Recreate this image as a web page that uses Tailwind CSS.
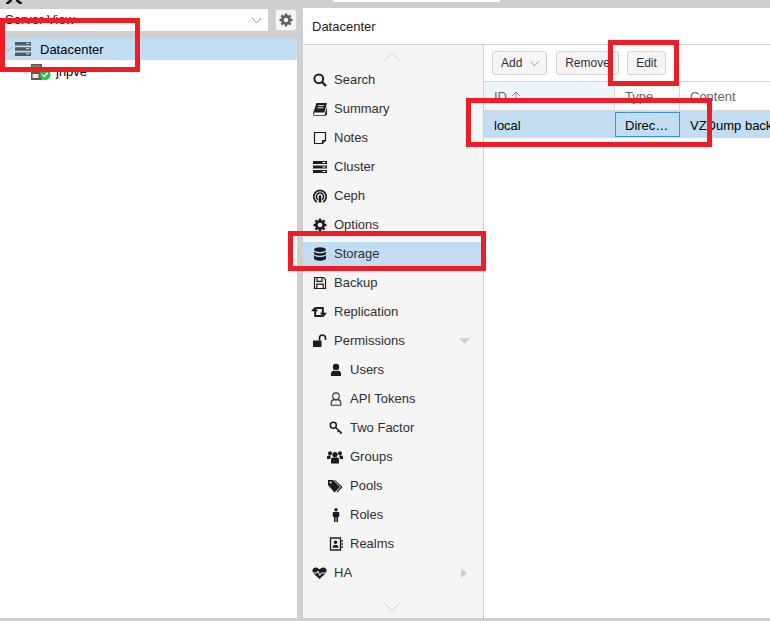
<!DOCTYPE html>
<html lang="en">
<head>
  <meta charset="UTF-8" />
  <meta name="viewport" content="width=device-width, initial-scale=1.0"/>
  <title>Datacenter - Storage</title>
  <script src="https://cdn.jsdelivr.net/npm/@tailwindcss/browser@4"></script>
</head>
<body class="bg-[#cfcfcf] font-['Liberation_Sans',Arial,sans-serif] text-[13px] text-[#303030]">
<div class="relative w-[770px] h-[621px] overflow-hidden flex flex-col">

  <!-- top strip, cut off by the crop -->
  <div class="h-[8px] shrink-0 flex items-start">
    <svg class="ml-[5px] w-[18px] h-[4px]" viewBox="0 0 18 4"><path d="M6.500 0 L1.500 4 M11.500 0 L16.500 4" stroke="#111" stroke-width="2.600" fill="none"/></svg>
    <div class="ml-[310px] w-[167px] h-[2px] bg-white"></div>
  </div>

  <div class="flex-1 flex gap-[6px] min-h-0">
    <!-- resource tree -->
    <div class="w-[297px] flex flex-col">
      <div class="mt-px h-[22px] flex gap-[7px]">
        <div class="w-[268px] bg-white flex items-center justify-between pl-[5px] pr-[6px]">
          <span class="text-[#222]">Server View</span>
          <svg class="w-[11px] h-[7px]" viewBox="0 0 11 7"><path d="M1 1 L5.500 6 L10 1" stroke="#9a9a9a" fill="none"/></svg>
        </div>
        <div class="w-[22px] bg-[#f5f5f5] border border-[#d8d8d8] rounded-[3px] flex items-center justify-center">
          <svg class="w-[14px] h-[14px]" viewBox="0 0 14 14"><circle cx="7" cy="7" r="3.600" fill="none" stroke="#606060" stroke-width="2.600"/><path d="M7 .5V3M7 11v2.500M.5 7H3M11 7h2.500M2.400 2.400l1.800 1.800M9.800 9.800l1.800 1.800M2.400 11.600l1.800-1.800M9.800 4.200l1.800-1.800" stroke="#606060" stroke-width="2.400"/></svg>
        </div>
      </div>
      <div class="mt-[7px] flex-1 bg-white">
        <div class="h-[22px] bg-[#c2ddf2] flex items-center pl-[4px] text-black">
          <svg class="w-[9px] h-[6px]" viewBox="0 0 9 6"><path d="M.5 .5 L4.500 5 L8.500 .5" stroke="#a8b4bd" fill="none"/></svg>
          <svg class="ml-[2px] w-[16px] h-[14px]" viewBox="0 0 16 14"><path d="M0 0h16v3.600H0zM0 5.200h16v3.600H0zM0 10.400h16V14H0z" fill="#4d5b66"/><path d="M11 1.400h3.500M11 6.600h3.500M11 11.800h3.500" stroke="#d7dde2"/></svg>
          <span class="ml-[9px] pt-px">Datacenter</span>
        </div>
        <div class="h-[24px] flex items-center pl-[22px] text-black">
          <svg class="w-[7px] h-[5px]" viewBox="0 0 7 5"><path d="M.5 .5 L3.500 4 L6.500 .5" stroke="#a8b4bd" fill="none"/></svg>
          <svg class="ml-[2px] w-[20px] h-[16px]" viewBox="0 0 20 16"><path d="M0 0h11v16H0z" fill="#5e5a52"/><path d="M1.500 2h8M1.500 5h8" stroke="#a09a8c"/><path d="M1.500 10h6v4h-6z" fill="#e8e4da"/><circle cx="14" cy="10.500" r="5.500" fill="#21bf4b"/><path d="M11.300 10.500l2 2 3.400-3.800" stroke="#fff" stroke-width="1.600" fill="none"/></svg>
          <span class="ml-[5px]">jnpve</span>
        </div>
      </div>
    </div>

    <!-- datacenter panel -->
    <div class="flex-1 bg-white flex flex-col min-w-0">
      <div class="h-[37px] shrink-0 border-b border-[#cfcfcf] flex items-center pl-[9px] pt-[2px] text-[#222]">Datacenter</div>
      <div class="flex-1 flex min-h-0">

        <!-- side menu -->
        <div class="w-[181px] shrink-0 bg-[#f5f5f5] border-r border-[#cfcfcf] flex flex-col">
          <div class="h-[23px] flex items-start justify-center pt-[7px] pr-[3px]">
            <svg class="w-[16px] h-[9px]" viewBox="0 0 16 9"><path d="M.5 8.500 L8 1 L15.500 8.500" stroke="#d4d4d4" fill="none"/></svg>
          </div>
          <div class="h-[24px] mb-[5px] flex items-center pl-[10px]">
            <svg class="w-[14px] h-[14px] mr-[7px]" viewBox="0 0 14 14"><circle cx="5.800" cy="5.800" r="4.400" fill="none" stroke="#1c1c1c" stroke-width="2"/><path d="M9 9l4 4" stroke="#1c1c1c" stroke-width="2.400"/></svg>
            Search</div>
          <div class="h-[24px] mb-[5px] flex items-center pl-[10px]">
            <svg class="w-[14px] h-[14px] mr-[7px]" viewBox="0 0 14 14"><path d="M3.500 1H14l-2.600 9.600H1.600L.6 12c.2 1 .8 1.200 1.600 1.200h9.400L14 4.500v8L12 14H2c-1.400 0-2-1-2-2.400z" fill="#1c1c1c"/><path d="M5 3.600h6M4.400 5.800h6" stroke="#f5f5f5" stroke-width=".9"/></svg>
            Summary</div>
          <div class="h-[24px] mb-[5px] flex items-center pl-[10px]">
            <svg class="w-[14px] h-[14px] mr-[7px]" viewBox="0 0 14 14"><path d="M1.500 1.500h11v8l-3 3h-8z" fill="none" stroke="#1c1c1c" stroke-width="1.200"/><path d="M12.500 9.500h-3v3" fill="none" stroke="#1c1c1c" stroke-width="1.200"/></svg>
            Notes</div>
          <div class="h-[24px] mb-[5px] flex items-center pl-[10px]">
            <svg class="w-[14px] h-[14px] mr-[7px]" viewBox="0 0 14 14"><path d="M0 1h14v3H0zM0 5.500h14v3H0zM0 10h14v3H0z" fill="#1c1c1c"/><path d="M9.500 2.500h3M9.500 7h3M9.500 11.500h3" stroke="#f5f5f5"/></svg>
            Cluster</div>
          <div class="h-[24px] mb-[5px] flex items-center pl-[10px]">
            <svg class="w-[14px] h-[14px] mr-[7px]" viewBox="0 0 14 14"><g fill="none" stroke="#1c1c1c"><path d="M4 13A6.200 6.200 0 1 1 10 13" stroke-width="1.700"/><path d="M5 10.600A3.600 3.600 0 1 1 9 10.600" stroke-width="1.500"/></g><path d="M5.700 13.500V7.500a1.300 1.300 0 0 1 2.600 0v6z" fill="#1c1c1c"/></svg>
            Ceph</div>
          <div class="h-[24px] mb-[5px] flex items-center pl-[10px]">
            <svg class="w-[14px] h-[14px] mr-[7px]" viewBox="0 0 14 14"><circle cx="7" cy="7" r="3.600" fill="none" stroke="#1c1c1c" stroke-width="2.600"/><path d="M7 .5V3M7 11v2.500M.5 7H3M11 7h2.500M2.400 2.400l1.800 1.800M9.800 9.800l1.800 1.800M2.400 11.600l1.800-1.800M9.800 4.200l1.800-1.800" stroke="#1c1c1c" stroke-width="2.400"/></svg>
            Options</div>
          <div class="h-[24px] mb-[5px] bg-[#c2ddf2] flex items-center pl-[10px]">
            <svg class="w-[14px] h-[14px] mr-[7px]" viewBox="0 0 14 14"><ellipse cx="7" cy="2.600" rx="6" ry="2.400" fill="#1c1c1c"/><path d="M1 4.400v2c0 1.300 2.700 2.300 6 2.300s6-1 6-2.300v-2c-1 1.200-3.400 1.900-6 1.900s-5-.7-6-1.900zM1 8.200v3c0 1.500 2.700 2.500 6 2.500s6-1 6-2.500v-3c-1 1.200-3.400 1.900-6 1.900s-5-.7-6-1.900z" fill="#1c1c1c"/></svg>
            Storage</div>
          <div class="h-[24px] mb-[5px] flex items-center pl-[10px]">
            <svg class="w-[14px] h-[14px] mr-[7px]" viewBox="0 0 14 14"><path d="M1.500 1.500h9l2 2v9h-11z" fill="none" stroke="#1c1c1c" stroke-width="1.200"/><path d="M4 2v3.400h5V2M3.800 12.500V8.200h6.400v4.300" fill="none" stroke="#1c1c1c" stroke-width="1.200"/></svg>
            Backup</div>
          <div class="h-[24px] mb-[5px] flex items-center pl-[8px]">
            <svg class="w-[16px] h-[14px] mr-[7px]" viewBox="0 0 16 14"><path d="M3.500 2L7.200 6.200H5.200V10H10.500l1.800 2H3.200V6.200H0z" fill="#1c1c1c"/><path d="M12.500 12L8.800 7.800h2V4H5.500L3.700 2h9.100v5.800H16z" fill="#1c1c1c"/></svg>
            Replication</div>
          <div class="h-[24px] mb-[5px] flex items-center pl-[10px] pr-[13px]">
            <svg class="w-[14px] h-[14px] mr-[7px]" viewBox="0 0 14 14"><path d="M0 6.500h8.500V13H0z" fill="#1c1c1c"/><path d="M6.500 6.500V4a3 3 0 0 1 6 0v2" fill="none" stroke="#1c1c1c" stroke-width="1.600"/></svg>
            Permissions
            <svg class="ml-auto w-[11px] h-[6px]" viewBox="0 0 11 6"><path d="M0 0h11L5.500 6z" fill="#d0d0d0"/></svg>
          </div>
          <div class="h-[24px] mb-[5px] flex items-center pl-[26px]">
            <svg class="w-[14px] h-[14px] mr-[7px]" viewBox="0 0 14 14"><circle cx="7" cy="4" r="3.200" fill="#1c1c1c"/><path d="M2 13c-.6-3.500 1-5.400 2.800-5.600 1.400.8 3 .8 4.400 0C11 7.600 12.600 9.500 12 13z" fill="#1c1c1c"/></svg>
            Users</div>
          <div class="h-[24px] mb-[5px] flex items-center pl-[26px]">
            <svg class="w-[14px] h-[14px] mr-[7px]" viewBox="0 0 14 14"><circle cx="7" cy="4.200" r="3.300" fill="none" stroke="#333" stroke-width="1.100"/><path d="M2.200 13.200c-.5-3.300.6-5 2.600-5.600 1.400.8 3 .8 4.400 0 2 .6 3.100 2.300 2.600 5.600z" fill="none" stroke="#333" stroke-width="1.100"/></svg>
            API Tokens</div>
          <div class="h-[24px] mb-[5px] flex items-center pl-[26px]">
            <svg class="w-[14px] h-[14px] mr-[7px]" viewBox="0 0 14 14"><circle cx="4.300" cy="4.300" r="3" fill="none" stroke="#1c1c1c" stroke-width="1.500"/><path d="M6.500 6.500l6.300 5.500M10 9.500l-1.300 1.500M12 11.300l-1 1.300" stroke="#1c1c1c" stroke-width="1.400"/></svg>
            Two Factor</div>
          <div class="h-[24px] mb-[5px] flex items-center pl-[24px]">
            <svg class="w-[16px] h-[14px] mr-[7px]" viewBox="0 0 16 14"><circle cx="8" cy="4.600" r="2.600" fill="#1c1c1c"/><circle cx="3" cy="3.200" r="2" fill="#1c1c1c"/><circle cx="13" cy="3.200" r="2" fill="#1c1c1c"/><path d="M4 13.500V9.500c0-1.500 1.200-2 2-2h4c.8 0 2 .5 2 2v4z" fill="#1c1c1c"/><path d="M0 9V7c0-1 .8-1.500 1.500-1.500h2.300L3.200 9zM16 9V7c0-1-.8-1.500-1.500-1.500h-2.300L12.800 9z" fill="#1c1c1c"/></svg>
            Groups</div>
          <div class="h-[24px] mb-[5px] flex items-center pl-[25px]">
            <svg class="w-[15px] h-[14px] mr-[7px]" viewBox="0 0 15 14"><path d="M0 1h5l7 7-5.500 5.500L0 6z" fill="#1c1c1c"/><circle cx="2.600" cy="3.500" r="1" fill="#f5f5f5"/><path d="M7 1l7.500 7-5 5.500-1-.8L12.800 8 6 1z" fill="#1c1c1c"/></svg>
            Pools</div>
          <div class="h-[24px] mb-[5px] flex items-center pl-[26px]">
            <svg class="w-[14px] h-[14px] mr-[7px]" viewBox="0 0 14 14"><circle cx="7" cy="1.800" r="1.700" fill="#1c1c1c"/><path d="M3.800 4h6.400v5H9v5H7.400V9.500h-.8V14H5V9H3.800z" fill="#1c1c1c"/></svg>
            Roles</div>
          <div class="h-[24px] mb-[5px] flex items-center pl-[26px]">
            <svg class="w-[14px] h-[14px] mr-[7px]" viewBox="0 0 14 14"><path d="M1.500 1h10v12h-10z" fill="none" stroke="#1c1c1c" stroke-width="1.300"/><circle cx="6.500" cy="5.200" r="1.800" fill="#1c1c1c"/><path d="M3.500 10.800c0-2 1.200-3 3-3s3 1 3 3z" fill="#1c1c1c"/><path d="M13 3v2M13 6v2M13 9v2" stroke="#1c1c1c" stroke-width="1.300"/></svg>
            Realms</div>
          <div class="h-[24px] flex items-center pl-[9px] pr-[16px]">
            <svg class="w-[15px] h-[14px] mr-[7px]" viewBox="0 0 15 14"><path d="M7.500 13L1.500 7.500C-.5 5.500.3 1.500 3.800 1.500c1.700 0 3 1 3.700 2 .7-1 2-2 3.700-2 3.500 0 4.300 4 2.300 6z" fill="#1c1c1c"/><path d="M0 7h4.800l1.200-2 1.800 4.500L9.200 7H15" fill="none" stroke="#f5f5f5" stroke-width="1"/></svg>
            HA
            <svg class="ml-auto w-[6px] h-[10px]" viewBox="0 0 6 10"><path d="M0 0l6 5-6 5z" fill="#d0d0d0"/></svg>
          </div>
          <div class="flex-1 flex items-start justify-center pt-[18px] pr-[3px]">
            <svg class="w-[16px] h-[9px]" viewBox="0 0 16 9"><path d="M.5 .5 L8 8 L15.500 .5" stroke="#c8c8c8" fill="none"/></svg>
          </div>
        </div>

        <!-- storage grid -->
        <div class="flex-1 min-w-0 overflow-hidden">
          <div class="h-[36px] flex items-center gap-[8px] pl-[8px] text-[12px] text-[#303030]">
            <div class="w-[55px] h-[24px] bg-[#f5f5f5] border border-[#d4d4d4] rounded-[3px] flex items-center pl-[8px] gap-[8px]">Add
              <svg class="w-[9px] h-[5px]" viewBox="0 0 9 5"><path d="M.5 .5 L4.500 4.500 L8.500 .5" stroke="#a8a8a8" fill="none"/></svg>
            </div>
            <div class="ml-px w-[63px] h-[24px] bg-[#f5f5f5] border border-[#d4d4d4] rounded-[3px] flex items-center justify-center">Remove</div>
            <div class="w-[39px] h-[24px] bg-[#f5f5f5] border border-[#d4d4d4] rounded-[3px] flex items-center justify-center">Edit</div>
          </div>
          <div class="h-[30px] flex border-y border-[#d6d6d6] text-[#666] w-[290px]">
            <div class="w-[131px] bg-[#edf4fb] border-r border-[#d6d6d6] flex items-center pl-[10px] pt-[2px] gap-[4px]">ID
              <svg class="w-[10px] h-[12px]" viewBox="0 0 10 12"><path d="M5 12V1M1 5L5 1 9 5" stroke="#8a8a8a" fill="none"/></svg>
            </div>
            <div class="w-[65px] border-r border-[#d6d6d6] flex items-center pl-[10px] pt-[2px]">Type</div>
            <div class="flex-1 flex items-center pl-[10px] pt-[2px] whitespace-nowrap">Content</div>
          </div>
          <div class="h-[27px] flex bg-[#c2ddf2] text-black w-[290px] whitespace-nowrap">
            <div class="w-[131px] flex items-center pl-[10px] pt-[2px]">local</div>
            <div class="w-[65px] my-[1px] border border-[#3892d4] flex items-center pl-[9px] pt-[2px]">Direc…</div>
            <div class="flex-1 flex items-center pl-[10px] pt-[2px] overflow-hidden">VZDump backup file</div>
          </div>
        </div>
      </div>
    </div>
  </div>
  <div class="h-[3px] shrink-0"></div>

  <!-- red annotation boxes drawn over the screenshot -->
  <div class="absolute left-0 top-[18px] w-[140px] h-[54px] border-[5px] border-[#ee1c25]"></div>
  <div class="absolute left-[608px] top-[40px] w-[71px] h-[46px] border-[5px] border-[#ee1c25]"></div>
  <div class="absolute left-[466px] top-[98px] w-[246px] h-[49px] border-[5px] border-[#ee1c25]"></div>
  <div class="absolute left-[288px] top-[231px] w-[198px] h-[40px] border-[5px] border-[#ee1c25]"></div>
</div>
</body>
</html>
